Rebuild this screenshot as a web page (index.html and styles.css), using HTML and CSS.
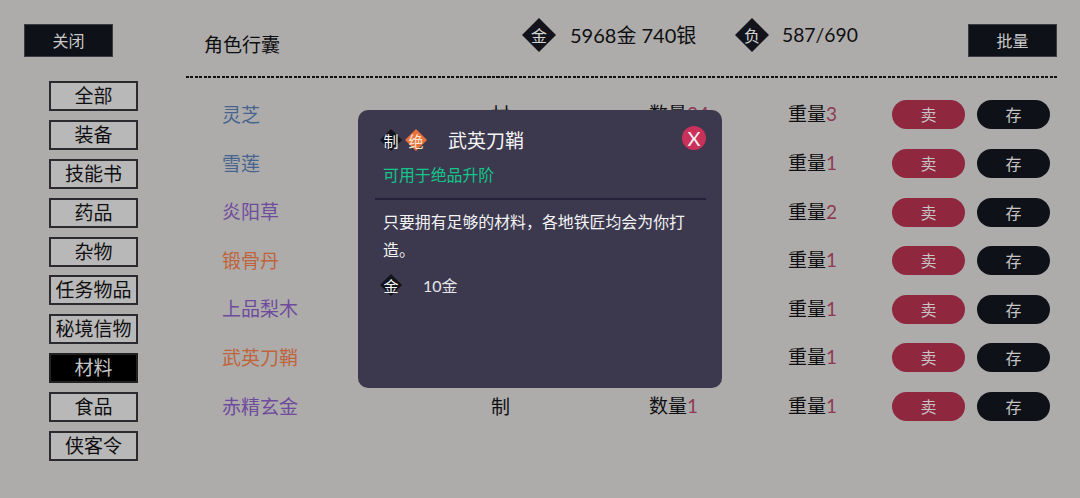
FILE: index.html
```html
<!DOCTYPE html>
<html lang="zh">
<head>
<meta charset="utf-8">
<title>角色行囊</title>
<link rel="stylesheet" href="styles.css">
</head>
<body>
<div class="app">
  <aside class="side">
    <button class="dark-btn">关闭</button>
    <nav class="tabs">
      <div class="tab">全部</div>
      <div class="tab">装备</div>
      <div class="tab">技能书</div>
      <div class="tab">药品</div>
      <div class="tab">杂物</div>
      <div class="tab">任务物品</div>
      <div class="tab">秘境信物</div>
      <div class="tab active">材料</div>
      <div class="tab">食品</div>
      <div class="tab">侠客令</div>
    </nav>
  </aside>
  <main class="main">
    <header class="top">
      <h1 class="title">角色行囊</h1>
      <div class="stat money"><span class="dia big">金</span><span class="stat-text">5968金 740银</span></div>
      <div class="stat load"><span class="dia big">负</span><span class="stat-text">587/690</span></div>
      <button class="dark-btn batch">批量</button>
    </header>
    <div class="rows">
      <div class="row"><span class="blue">灵芝</span><span>材</span><span>数量<b>24</b></span><span>重量<b>3</b></span><a class="btn sell">卖</a><a class="btn store">存</a></div>
      <div class="row"><span class="blue">雪莲</span><span></span><span></span><span>重量<b>1</b></span><a class="btn sell">卖</a><a class="btn store">存</a></div>
      <div class="row"><span class="purple">炎阳草</span><span></span><span></span><span>重量<b>2</b></span><a class="btn sell">卖</a><a class="btn store">存</a></div>
      <div class="row"><span class="orange">锻骨丹</span><span></span><span></span><span>重量<b>1</b></span><a class="btn sell">卖</a><a class="btn store">存</a></div>
      <div class="row"><span class="purple">上品梨木</span><span></span><span></span><span>重量<b>1</b></span><a class="btn sell">卖</a><a class="btn store">存</a></div>
      <div class="row"><span class="orange">武英刀鞘</span><span></span><span></span><span>重量<b>1</b></span><a class="btn sell">卖</a><a class="btn store">存</a></div>
      <div class="row"><span class="purple">赤精玄金</span><span>制</span><span>数量<b>1</b></span><span>重量<b>1</b></span><a class="btn sell">卖</a><a class="btn store">存</a></div>
    </div>
  </main>
  <section class="modal">
    <div class="m-head">
      <span class="dia small">制</span>
      <span class="dia small hot">绝</span>
      <h2 class="m-title">武英刀鞘</h2>
      <span class="close">X</span>
    </div>
    <p class="m-use">可用于绝品升阶</p>
    <hr class="m-rule">
    <p class="m-desc">只要拥有足够的材料，各地铁匠均会为你打造。</p>
    <div class="m-price"><span class="dia small">金</span><span class="m-cost">10金</span></div>
  </section>
</div>
</body>
</html>
```
FILE: styles.css
```css
* { box-sizing: border-box; }
html, body { margin: 0; padding: 0; }
body {
  width: 1080px;
  height: 498px;
  overflow: hidden;
  background: #adacab;
  color: #0f0f11;
  font-family: "Noto Sans CJK SC", "Noto Sans", sans-serif;
  font-weight: 400;
}
.app { position: relative; display: flex; width: 1080px; height: 498px; }
.side { width: 186px; flex: none; padding: 24px 0 0 24px; }
.dark-btn {
  display: block;
  width: 89px;
  height: 33px;
  padding: 0;
  border: 1px solid #3a3c42;
  background: #0e1118;
  color: #c9c9c9;
  font: 400 16px/29px "Noto Sans CJK SC", sans-serif;
}
.tabs { display: flex; flex-direction: column; gap: 8.9px; margin: 24px 0 0 25px; width: 89px; }
.tab {
  height: 30px;
  border: 2px solid #2b2b2f;
  background: #b9b8b8;
  font-size: 19px;
  line-height: 24px;
  text-align: center;
  white-space: nowrap;
}
.tab.active { background: #000; border-color: #222; color: #c6c6c6; }
.main { flex: 1; padding-right: 24px; }
.top {
  position: relative;
  display: flex;
  align-items: flex-start;
  height: 78px;
  padding-top: 24px;
  background: repeating-linear-gradient(90deg, #111 0 3px, transparent 3px 4.5px) left bottom / 100% 2px no-repeat;
}
.title { margin: 7px 0 0 18px; width: 318px; font-size: 19px; font-weight: 400; line-height: 26px; flex: none; }
.stat { display: flex; align-items: center; height: 24px; flex: none; }
.money { width: 213px; margin-top: -1px; }
.load { width: 233px; margin-top: -1px; }
.stat-text { font: 400 20px/24px Lato, "Noto Sans CJK SC", sans-serif; margin-left: 14px; }
.load .stat-text { font-size: 19.3px; margin-left: 13px; }
.dia {
  position: relative;
  isolation: isolate;
  display: flex;
  align-items: center;
  justify-content: center;
  flex: none;
  color: #d4d4d4;
}
.dia::before {
  content: "";
  position: absolute;
  inset: 0;
  z-index: -1;
  background: #12131b;
  clip-path: polygon(50% 0, 100% 50%, 50% 100%, 0 50%);
}
.dia.big { width: 34px; height: 34px; font-size: 16px; }
.dia.small { width: 22px; height: 22px; font-size: 15px; color: #f6f6f6; }
.dia.hot { color: #f8e4d4; }
.dia.hot::before { background: #e7713a; }
.rows { display: flex; flex-direction: column; margin: 11.7px 0 0 36px; }
.row {
  display: grid;
  grid-template-columns: 269px 158px 139px 104px 73px 73px;
  align-items: center;
  height: 48.6px;
  font-size: 19px;
}
.row span { line-height: 26px; }
.row b { font-weight: 400; color: #8e3a55; font-family: Lato, sans-serif; }
.blue { color: #47648f; }
.purple { color: #6f4b9c; }
.orange { color: #bf643c; }
.btn {
  display: block;
  width: 73px;
  height: 29px;
  margin-top: 2px;
  border-radius: 15px;
  text-align: center;
  font-size: 16px;
  line-height: 28px;
  color: #c8c4c4;
}
.sell { background: #8f273f; }
.store { background: #0e1118; margin-left: 12px; }
.modal {
  position: absolute;
  left: 358px;
  top: 110px;
  width: 364px;
  height: 278px;
  border-radius: 10px;
  background: #3c394e;
  padding: 18px 16px 0 17px;
  color: #f4f4f6;
}
.m-head { display: flex; align-items: center; height: 24px; margin-left: 5px; }
.m-head .hot { margin-left: 3px; }
.m-title { margin: 0 0 0 21px; font-size: 19px; font-weight: 400; line-height: 24px; flex: 1; }
.close {
  width: 24px;
  height: 24px;
  margin-top: -4px;
  border-radius: 50%;
  background: #c9305a;
  color: #f5f0f2;
  font: 400 20px/24px Lato, sans-serif;
  text-align: center;
}
.m-use { margin: 11px 0 0 8px; font-size: 15.9px; line-height: 23px; color: #14c58a; }
.m-rule { margin: 12px 0 0; height: 2px; border: 0; background: #24213a; }
.m-desc { margin: 8px 0 0 8px; width: 320px; font-size: 15.9px; line-height: 28px; }
.m-price { display: flex; align-items: center; height: 24px; margin: 9px 0 0 5px; }
.m-cost { margin-left: 21px; font-size: 16px; color: #e6e6ea; font-family: Lato, "Noto Sans CJK SC", sans-serif; }
```
